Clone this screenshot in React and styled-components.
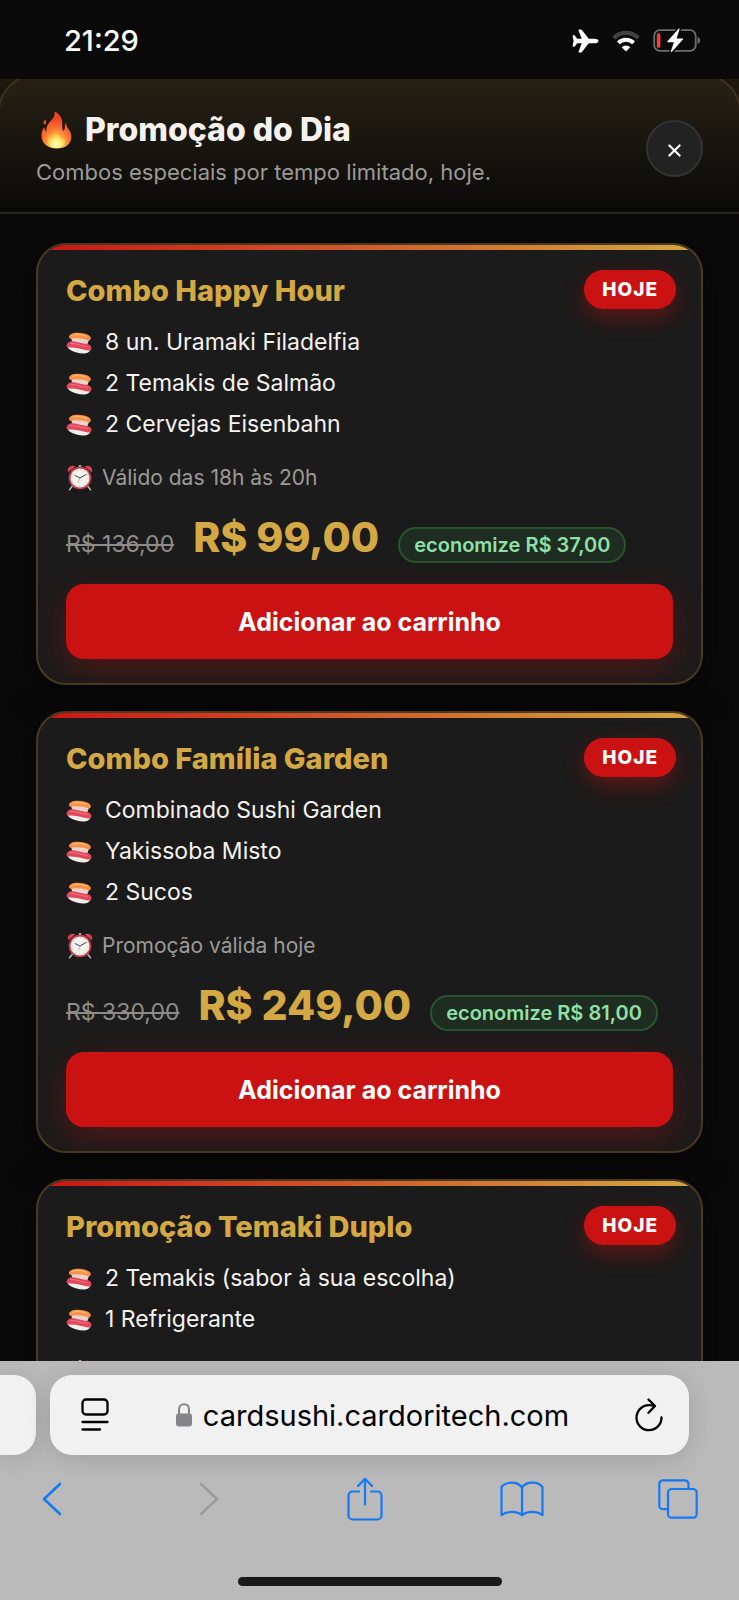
import React from "react";
import styled, { createGlobalStyle } from "styled-components";

const combos = [
  {
    title: "Combo Happy Hour",
    items: ["8 un. Uramaki Filadelfia", "2 Temakis de Salmão", "2 Cervejas Eisenbahn"],
    note: "Válido das 18h às 20h",
    oldPrice: "R$ 136,00",
    price: "R$ 99,00",
    saving: "economize R$ 37,00",
  },
  {
    title: "Combo Família Garden",
    items: ["Combinado Sushi Garden", "Yakissoba Misto", "2 Sucos"],
    note: "Promoção válida hoje",
    oldPrice: "R$ 330,00",
    price: "R$ 249,00",
    saving: "economize R$ 81,00",
  },
  {
    title: "Promoção Temaki Duplo",
    items: ["2 Temakis (sabor à sua escolha)", "1 Refrigerante"],
  },
];

const PlaneIcon = () => (
  <svg width="27" height="24" viewBox="0 0 27 24" fill="#fff" aria-hidden="true">
    <path d="M26.500 12c0 1.400-2 2.300-4.200 2.300h-5.600L9.900 23c-.3.400-.7.600-1.200.6H7.300c-.6 0-.9-.5-.7-1l3.100-8.300H5.200l-2.200 3c-.2.300-.5.400-.9.400h-.8c-.5 0-.8-.4-.7-.9L1.600 12 .6 7.200c-.1-.5.200-.9.700-.9h.8c.4 0 .7.100.9.400l2.200 3h4.500L6.600 1.400c-.2-.5.100-1 .7-1h1.400c.5 0 .9.200 1.200.6l6.800 8.700h5.600c2.200 0 4.200.9 4.200 2.300z" />
  </svg>
);

const WifiIcon = () => (
  <svg width="28" height="22" viewBox="0 0 28 22" fill="none" aria-hidden="true">
    <path d="M1.800 7.900a17.300 17.300 0 0 1 24.400 0" stroke="#424242" strokeWidth="4.200" />
    <path d="M6.400 12.800a10.800 10.800 0 0 1 15.200 0" stroke="#fff" strokeWidth="4" />
    <path d="M14 21.500l-4.300-4.300a6.200 6.200 0 0 1 8.600 0z" fill="#fff" />
  </svg>
);

const BatteryIcon = () => (
  <svg width="48" height="25" viewBox="0 0 48 25" aria-hidden="true">
    <rect x="1.200" y="2.200" width="41.500" height="20.600" rx="5.500" fill="none" stroke="#6d6d6d" strokeWidth="1.800" />
    <path d="M44.500 9v7c1.700-.6 2.600-1.900 2.600-3.500S46.200 9.600 44.500 9z" fill="#6d6d6d" />
    <rect x="3.800" y="5.300" width="3.600" height="14.400" rx="1.500" fill="#f0403a" />
    <path
      d="M25.500.8L14.500 13.200c-.4.500-.2 1 .4 1h6l-3 9c-.3.900.4 1.200 1 .6L29.900 11.500c.4-.5.2-1-.4-1h-6l3-9c.3-.9-.4-1.300-1-.7z"
      fill="#fff"
      stroke="#0a0a0b"
      strokeWidth="3"
      paintOrder="stroke"
    />
  </svg>
);

const FireIcon = () => (
  <svg width="31" height="38" viewBox="0 0 31 38" aria-hidden="true">
    <defs>
      <radialGradient id="flame" cx=".5" cy=".9" r=".85">
        <stop offset="0" stopColor="#ffe860" />
        <stop offset=".25" stopColor="#ffb648" />
        <stop offset=".5" stopColor="#fb7a36" />
        <stop offset=".8" stopColor="#ee4726" />
        <stop offset="1" stopColor="#e8442a" />
      </radialGradient>
      <radialGradient id="core" cx=".5" cy=".8" r=".75">
        <stop offset="0" stopColor="#fffde0" />
        <stop offset=".35" stopColor="#fff170" />
        <stop offset=".7" stopColor="#ffc04a" stopOpacity=".8" />
        <stop offset="1" stopColor="#ff8f42" stopOpacity=".3" />
      </radialGradient>
    </defs>
    <path
      d="M15.500 37.500C6.200 37.500.5 32 .5 24.500c0-3.700 1.300-6.200 2.600-8.400.4 2.100 1 3.500 2.300 4.600C4.800 13.500 9 10.800 11.900 7.400 13.600 5.300 13.800 3 13.300.5c4.800 2 7.700 6 8 10.800.2 3.500-.6 6 .9 8.700 1.200-.8 1.700-2 1.600-4 0-1.500.3-3 1.200-4.300.2 3.400 1.900 5 3.500 7.800 1.200 2 1.900 4 1.900 6.200 0 7-5.600 11.800-14.900 11.800z"
      fill="url(#flame)"
    />
    <path d="M4.600 8.600c1 2 .8 3.800-.5 5.400-1-1-1.900-1.400-1.900-2.700 0-1.200 1.400-1.500 2.400-2.700z" fill="#e4461f" />
    <path
      d="M15.500 37c-5.500 0-9-3-9-7.300 0-2.700 1.400-4.900 3.200-6.400.1 1.900.7 3 1.900 3.700.2-3.800 1.600-6.600 4.600-8.400-.3 3.200.9 4.600 2.500 6.400 1 1.200 1.500 2.400 1.700 3.800 1-.7 1.500-1.600 1.600-2.700 1.500 1.200 2.300 2.700 2.300 4.400 0 4-3.500 6.500-8.800 6.500z"
      fill="url(#core)"
    />
  </svg>
);

const SushiIcon = () => (
  <svg width="26" height="22" viewBox="0 0 26 22" aria-hidden="true">
    <path d="M5 5.500c3-1.500 14-.5 18 2.500l-2 5H7z" fill="#ead3c8" />
    <path d="M3 4.600C3.500 2.200 7 .6 12 .7c6.500.2 12.500 2.200 12.800 5.200.1 1.900-1.300 2.800-2.600 2.300C18 6.600 11 5.600 5.500 6.700 3.800 7 2.800 6 3 4.600z" fill="#fb9149" />
    <path d="M6.500 3.300c4-1.500 9.500-1 14.500 1.200" fill="none" stroke="#ffbd6c" strokeWidth="1.200" />
    <path d="M1.500 14.500c5-.5 14 1.500 23 3.300-.8 2.600-3.800 3.900-7.500 3.700C9.500 21 2.500 18.500 1.500 14.500z" fill="#efede7" />
    <path d="M.5 13.800c.2-3 3.200-5 7-4.600 4.500.8 9 2.400 14.100 2.800 2.700.5 4.200 2.800 3.900 4.700-.3 1.600-1.800 2-3.600 1.700-6.400-1.200-12.400-3.200-18.700-2.900-1.700.1-2.700-.3-2.700-1.700z" fill="#e2475b" />
    <path d="M4 11.300c6-.3 11 2.700 18 3.200" fill="none" stroke="#ee7280" strokeWidth="1.200" />
  </svg>
);

const ClockIcon = () => (
  <svg width="28" height="27" viewBox="-1 0 28 27" aria-hidden="true">
    <path d="M5.500 22l-3 3.800M20.500 22l3 3.800" stroke="#b9b9b9" strokeWidth="1.500" strokeLinecap="round" />
    <path d="M1.200 8.300C-.5 4 3.300.2 8.500 2.200zM24.800 8.300C26.500 4 22.700.2 17.500 2.200z" fill="#da4350" />
    <path d="M11.800 1h2.400v3h-2.400z" fill="#aaa" />
    <circle cx="13" cy="14" r="11.300" fill="#c8404a" />
    <circle cx="13" cy="14" r="9.500" fill="#f5f3ee" />
    <circle cx="13" cy="14" r="8" fill="none" stroke="#aaa" strokeWidth="1" strokeDasharray=".8 3.390" />
    <path d="M8 11.500L13 14l6-3.500" fill="none" stroke="#444" strokeWidth="1" strokeLinecap="round" />
    <path d="M13 14l-2 5" stroke="#d77" strokeWidth=".6" />
  </svg>
);

const CloseIcon = () => (
  <svg width="13" height="13" viewBox="0 0 14 14" fill="none" stroke="#fff" strokeWidth="2.300" strokeLinecap="round" aria-hidden="true">
    <path d="M1.500 1.500l11 11M12.500 1.500l-11 11" />
  </svg>
);

const PageIcon = () => (
  <svg width="28" height="34" viewBox="0 0 28 34" fill="none" stroke="#000" strokeWidth="2.300" strokeLinecap="round" aria-hidden="true">
    <rect x="1.500" y="1.500" width="25" height="15" rx="3.500" />
    <path d="M1.500 24h25M1.500 31.500h17.500" />
  </svg>
);

const LockIcon = () => (
  <svg width="18" height="24" viewBox="0 0 18 24" aria-hidden="true">
    <path d="M4 12V6.500C4 3.200 6.100 1.200 9 1.200s5 2 5 5.300V12" fill="none" stroke="#86868a" strokeWidth="2" />
    <rect x="1" y="10.500" width="16" height="13" rx="2.400" fill="#86868a" />
  </svg>
);

const ReloadIcon = () => (
  <svg width="28" height="34" viewBox="0 0 28 34" fill="none" stroke="#000" strokeWidth="2.300" strokeLinecap="round" strokeLinejoin="round" aria-hidden="true">
    <path d="M26.500 19.500A12.500 12.500 0 1 1 14 7.200c2 0 3.800.2 5.300.7" />
    <path d="M13.500 1.500l6.500 6.500-6.500 6.800" />
  </svg>
);

const BackIcon = () => (
  <svg width="20" height="34" viewBox="0 0 20 34" fill="none" stroke="currentColor" strokeWidth="2.600" strokeLinecap="round" strokeLinejoin="round" aria-hidden="true">
    <path d="M18 2L2 17l16 15" />
  </svg>
);

const ForwardIcon = () => (
  <svg width="20" height="34" viewBox="0 0 20 34" fill="none" stroke="currentColor" strokeWidth="2.400" strokeLinecap="round" strokeLinejoin="round" aria-hidden="true">
    <path d="M2 2l16 15L2 32" />
  </svg>
);

const ShareIcon = () => (
  <svg width="36" height="44" viewBox="0 0 36 44" fill="none" stroke="currentColor" strokeWidth="2.200" strokeLinecap="round" strokeLinejoin="round" aria-hidden="true">
    <path d="M12 14.500H5.500a4 4 0 0 0-4 4v20a4 4 0 0 0 4 4h25a4 4 0 0 0 4-4v-20a4 4 0 0 0-4-4H24" />
    <path d="M18 27.500V2M11 9l7-7.200L25 9" />
  </svg>
);

const BookIcon = () => (
  <svg width="44" height="36" viewBox="0 0 44 36" fill="none" stroke="currentColor" strokeWidth="2.200" strokeLinecap="round" strokeLinejoin="round" aria-hidden="true">
    <path d="M22 6.500C17.500.2 6 .2 1.500 6v28.300c5-4.500 15.500-4.500 20.500 0 5-4.500 15.500-4.500 20.500 0V6C38 .2 26.500.2 22 6.500zM22 6.500v27.800" />
  </svg>
);

const TabsIcon = () => (
  <svg width="40" height="40" viewBox="0 0 40 40" fill="none" stroke="currentColor" strokeWidth="2.200" aria-hidden="true">
    <path d="M30.500 10V5a3.700 3.700 0 0 0-3.700-3.700H5A3.700 3.700 0 0 0 1.300 5v21.500a3.700 3.700 0 0 0 3.700 3.700h5" />
    <rect x="10" y="10" width="28.700" height="28.700" rx="3.700" />
  </svg>
);

const ComboCard = ({ combo }) => (
  <Card>
    <Badge>HOJE</Badge>
    <CardTitle>{combo.title}</CardTitle>
    <Items>
      {combo.items.map((item) => (
        <Item key={item}>
          <SushiIcon />
          {item}
        </Item>
      ))}
    </Items>
    <Note>
      <ClockIcon />
      {combo.note}
    </Note>
    {combo.price && (
      <>
        <Prices>
          <OldPrice>{combo.oldPrice}</OldPrice>
          <Price>{combo.price}</Price>
          <Saving>{combo.saving}</Saving>
        </Prices>
        <AddButton type="button">Adicionar ao carrinho</AddButton>
      </>
    )}
  </Card>
);

const App = () => {
  return (
    <Screen>
      <GlobalStyle />
      <StatusBar>
        <Time>21:29</Time>
        <StatusIcons>
          <PlaneIcon />
          <WifiIcon />
          <BatteryIcon />
        </StatusIcons>
      </StatusBar>
      <Header>
        <div>
          <Heading>
            <FireIcon />
            Promoção do Dia
          </Heading>
          <Subtitle>Combos especiais por tempo limitado, hoje.</Subtitle>
        </div>
        <CloseButton type="button" aria-label="Fechar">
          <CloseIcon />
        </CloseButton>
      </Header>
      <Content>
        {combos.map((combo) => (
          <ComboCard key={combo.title} combo={combo} />
        ))}
      </Content>
      <BrowserBar>
        <AddressRow>
          <PreviousTab />
          <AddressBar>
            <BarButton type="button" aria-label="Página">
              <PageIcon />
            </BarButton>
            <Address href="#">
              <LockIcon />
              cardsushi.cardoritech.com
            </Address>
            <BarButton type="button" aria-label="Recarregar">
              <ReloadIcon />
            </BarButton>
          </AddressBar>
        </AddressRow>
        <Toolbar>
          <BarButton type="button" aria-label="Voltar">
            <BackIcon />
          </BarButton>
          <BarButton type="button" aria-label="Avançar" disabled>
            <ForwardIcon />
          </BarButton>
          <BarButton type="button" aria-label="Compartilhar">
            <ShareIcon />
          </BarButton>
          <BarButton type="button" aria-label="Favoritos">
            <BookIcon />
          </BarButton>
          <BarButton type="button" aria-label="Abas">
            <TabsIcon />
          </BarButton>
        </Toolbar>
        <HomeIndicator />
      </BrowserBar>
    </Screen>
  );
};

const GlobalStyle = createGlobalStyle`
  * {
    box-sizing: border-box;
    margin: 0;
    padding: 0;
  }
  body {
    background: #0a0a0a;
    color: #f5f2ee;
    font-family: Inter, "Liberation Sans", sans-serif;
  }
  button {
    font-family: inherit;
    border: none;
    cursor: pointer;
  }
  svg {
    display: block;
    flex-shrink: 0;
  }
`;

const Screen = styled.div`
  height: 100vh;
  display: flex;
  flex-direction: column;
  overflow: hidden;
`;

const StatusBar = styled.div`
  display: flex;
  align-items: center;
  justify-content: space-between;
  height: 79px;
  padding: 2px 38px 0 64px;
  background: #0a0a0b;
  flex-shrink: 0;
`;

const Time = styled.time`
  color: #fff;
  font-size: 29px;
  font-weight: 500;
`;

const StatusIcons = styled.div`
  display: flex;
  align-items: center;
  gap: 13px;
`;

const Header = styled.header`
  position: relative;
  display: flex;
  align-items: center;
  justify-content: space-between;
  padding: 27px 36px 22px;
  border-bottom: 2px solid #2b271e;
  background: linear-gradient(#272014, #0a0a0a);
  flex-shrink: 0;
  overflow: hidden;

  /* sheet outline, only the rounded top corners show */
  &::before {
    content: "";
    position: absolute;
    inset: -5px -2px -60px;
    border: 2px solid rgba(212, 168, 67, 0.15);
    border-radius: 38px;
    box-shadow: 0 0 0 20px rgba(20, 12, 0, 0.4);
    pointer-events: none;
  }
`;

const Heading = styled.h1`
  display: flex;
  align-items: center;
  gap: 13px;
  padding-left: 5px;
  font-size: 32px;
  font-weight: 800;
  line-height: 48px;
`;

const Subtitle = styled.p`
  color: #9c9a97;
  font-size: 22px;
  line-height: 36px;
`;

const CloseButton = styled.button`
  display: flex;
  align-items: center;
  justify-content: center;
  width: 57px;
  height: 57px;
  padding-top: 5px;
  border: 2px solid #333;
  border-radius: 50%;
  background: #222223;
`;

const Content = styled.main`
  flex: 1;
  min-height: 0;
  display: flex;
  flex-direction: column;
  gap: 26px;
  padding: 29px 36px 0;
  overflow: hidden;
`;

const Card = styled.section`
  position: relative;
  flex-shrink: 0;
  padding: 26px 28px 24px;
  border: 2px solid #49391f;
  border-radius: 30px;
  background: #1b1b1b;
  box-shadow: 0 8px 36px rgba(0, 0, 0, 0.5);
  overflow: hidden;

  &::before {
    content: "";
    position: absolute;
    top: 0;
    left: 0;
    right: 0;
    height: 5px;
    background: linear-gradient(90deg, #cc1414, #d4a843);
  }
`;

const Badge = styled.span`
  position: absolute;
  top: 25px;
  right: 25px;
  padding: 0 18px;
  border-radius: 20px;
  background: #cb1213;
  color: #fff;
  font-size: 19px;
  font-weight: 800;
  letter-spacing: 1px;
  line-height: 39px;
  box-shadow: 0 8px 22px rgba(204, 18, 18, 0.4);
`;

const CardTitle = styled.h2`
  color: #d4a843;
  font-size: 29px;
  font-weight: 800;
  line-height: 40px;
`;

const Items = styled.ul`
  padding: 11px 0 10px;
  list-style: none;
`;

const Item = styled.li`
  display: flex;
  align-items: center;
  gap: 13px;
  font-size: 23px;
  line-height: 41px;
`;

const Note = styled.p`
  display: flex;
  align-items: center;
  gap: 8px;
  min-height: 44px;
  color: #9c9a97;
  font-size: 21px;
`;

const Prices = styled.div`
  display: flex;
  align-items: baseline;
  gap: 19px;
  padding: 10px 0 19px;
`;

const OldPrice = styled.s`
  color: #8e8c89;
  font-size: 23px;
`;

const Price = styled.strong`
  color: #d4a843;
  font-size: 41px;
  font-weight: 800;
  line-height: 56px;
`;

const Saving = styled.span`
  padding: 0 14px;
  border: 2px solid #28532f;
  border-radius: 18px;
  background: #1e2c21;
  color: #8fe0a6;
  font-size: 20px;
  font-weight: 600;
  line-height: 32px;
`;

const AddButton = styled.button`
  width: 100%;
  height: 75px;
  border-radius: 18px;
  background: #cb1213;
  color: #fff;
  font-size: 25px;
  font-weight: 700;
  box-shadow: 0 11px 34px rgba(204, 18, 18, 0.3);
`;

const BrowserBar = styled.footer`
  padding: 14px 0;
  background: #bababa;
  flex-shrink: 0;
  overflow: hidden;
`;

const AddressRow = styled.div`
  display: flex;
  gap: 14px;
  padding-right: 50px;
`;

const PreviousTab = styled.div`
  width: 36px;
  border-radius: 0 22px 22px 0;
  background: #f1f1f1;
  box-shadow: 0 4px 26px rgba(0, 0, 0, 0.14);
`;

const AddressBar = styled.div`
  flex: 1;
  display: flex;
  align-items: center;
  justify-content: space-between;
  height: 80px;
  padding: 0 18px 0 23px;
  border-radius: 22px;
  background: #f1f1f1;
  box-shadow: 0 4px 26px rgba(0, 0, 0, 0.14);
`;

const Address = styled.a`
  display: flex;
  align-items: center;
  gap: 10px;
  color: #000;
  font-size: 29px;
  text-decoration: none;
`;

const BarButton = styled.button`
  display: flex;
  align-items: center;
  justify-content: center;
  width: 44px;
  height: 44px;
  background: none;
  color: #1479f5;

  &:disabled {
    color: #9b9b9b;
    cursor: default;
  }
`;

const Toolbar = styled.nav`
  display: flex;
  align-items: center;
  justify-content: space-between;
  height: 88px;
  padding: 0 39px 0 30px;
`;

const HomeIndicator = styled.div`
  width: 264px;
  height: 9px;
  margin: 34px auto 0;
  border-radius: 5px;
  background: #191919;
`;

export default App;
